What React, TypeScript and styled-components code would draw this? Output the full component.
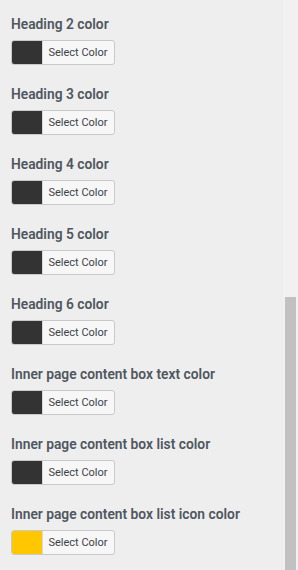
import styled, { createGlobalStyle } from 'styled-components'

const GlobalStyle = createGlobalStyle`
  html, body {
    margin: 0;
    padding: 0;
    background: #eeeeee;
    overflow: hidden;
  }
`

const Page = styled.div`
  display: flex;
  width: 298px;
  height: 570px;
  background: #eeeeee;
  font-family: Roboto, "Liberation Sans", sans-serif;
  overflow: hidden;
`

const Panel = styled.div`
  flex: 1;
  padding: 15px 0 0 11px;
  display: flex;
  flex-direction: column;
  gap: 20px;
`

const Field = styled.div`
  display: flex;
  flex-direction: column;
  gap: 7px;
`

const Label = styled.div`
  font-size: 13.8px;
  font-weight: 600;
  line-height: 18px;
  color: #50575e;
`

const ColorButton = styled.button`
  display: flex;
  align-items: stretch;
  width: 104px;
  height: 25px;
  padding: 0;
  border: 1px solid #c9c9c9;
  border-radius: 3px;
  background: #f7f7f7;
  box-sizing: border-box;
  overflow: hidden;
  cursor: pointer;
  font-family: inherit;
`

const Swatch = styled.span<{ $color: string }>`
  width: 30px;
  background: ${(p) => p.$color};
  border-right: 1px solid #d8d8d8;
`

const ButtonText = styled.span`
  flex: 1;
  display: flex;
  align-items: center;
  justify-content: center;
  font-size: 11px;
  color: #3c434a;
  padding-right: 1px;
`

const Track = styled.div`
  width: 15px;
  background: #f1f1f1;
  display: flex;
  justify-content: center;
`

const Thumb = styled.div`
  width: 11px;
  margin-top: 297px;
  height: 273px;
  background: #c1c1c1;
`

const fields = [
  { label: 'Heading 2 color', color: '#333333' },
  { label: 'Heading 3 color', color: '#333333' },
  { label: 'Heading 4 color', color: '#333333' },
  { label: 'Heading 5 color', color: '#333333' },
  { label: 'Heading 6 color', color: '#333333' },
  { label: 'Inner page content box text color', color: '#333333' },
  { label: 'Inner page content box list color', color: '#333333' },
  { label: 'Inner page content box list icon color', color: '#ffc700' },
]

export default function App() {
  return (
    <>
      <GlobalStyle />
      <Page>
        <Panel>
          {fields.map((f) => (
            <Field key={f.label}>
              <Label>{f.label}</Label>
              <ColorButton type="button">
                <Swatch $color={f.color} />
                <ButtonText>Select Color</ButtonText>
              </ColorButton>
            </Field>
          ))}
        </Panel>
        <Track>
          <Thumb />
        </Track>
      </Page>
    </>
  )
}
